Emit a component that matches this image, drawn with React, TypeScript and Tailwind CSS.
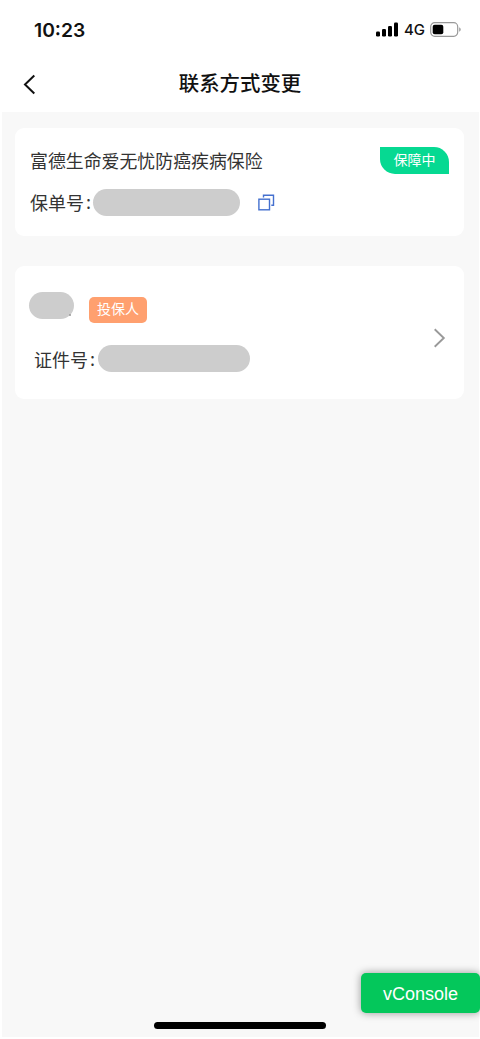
import type { ReactNode } from "react";

// Policy contact change page: status bar, nav bar, two cards and the
// vConsole debug switch that floats over the bottom corner.

function StatusBar() {
  return (
    <header className="flex h-[60px] items-center justify-between pl-[34px] pr-[18px]">
      <span className="font-['Inter','Liberation_Sans',sans-serif] text-[19.3px] font-semibold leading-6 text-[#111]">
        10:23
      </span>
      <div className="flex items-center">
        <svg className="-mt-px" width="23" height="15" viewBox="0 0 23 15" fill="#000">
          <rect x="0" y="9.5" width="4" height="5" rx="1.2" />
          <rect x="6" y="7" width="4" height="7.5" rx="1.2" />
          <rect x="12" y="4" width="4" height="10.5" rx="1.2" />
          <rect x="18" y="0.5" width="4" height="14" rx="1.2" />
        </svg>
        <span className="ml-[5px] w-[22px] font-['Inter','Liberation_Sans',sans-serif] text-[15px] font-medium leading-5 text-[#111]">
          4G
        </span>
        <svg className="-mt-px ml-1" width="32" height="15" viewBox="0 0 32 15" fill="none">
          <rect x="0.7" y="0.7" width="27" height="13.6" rx="4" stroke="#999" strokeWidth="1.2" />
          <rect x="2.7" y="2.7" width="10.6" height="9.6" rx="2" fill="#000" />
          <path d="M29.3 5.3c1.8.7 1.8 3.7 0 4.4z" fill="#888" />
        </svg>
      </div>
    </header>
  );
}

function NavBar() {
  return (
    <nav className="grid h-[52px] grid-cols-[60px_1fr_60px] items-start">
      <button aria-label="返回" className="pl-[23px] pt-[14px]">
        <svg width="14" height="21" viewBox="0 0 14 21" fill="none">
          <path d="M11.3 1.5L2 10.5l9.3 9" stroke="#111" strokeWidth="2" />
        </svg>
      </button>
      <h1 className="pt-[7px] text-center text-[20.4px] font-medium leading-[30px] text-[#111]">
        联系方式变更
      </h1>
    </nav>
  );
}

function Card({ className, children }: { className: string; children: ReactNode }) {
  return <section className={`rounded-[9px] bg-white ${className}`}>{children}</section>;
}

// Grey pill over a masked value.
function Mask({ className }: { className: string }) {
  return <span className={`block rounded-full bg-[#cdcdcd] ${className}`} />;
}

function Colon() {
  return <span className="ml-[2px] inline-block -translate-y-px">:</span>;
}

function PolicyCard() {
  return (
    <Card className="h-[108px] pl-[15px] pr-[15px] pt-[19px]">
      <div className="flex items-start justify-between">
        <h2 className="text-[17.9px] leading-[26px] text-[#333]">富德生命爱无忧防癌疾病保险</h2>
        <span className="h-[27px] w-[69px] rounded-bl-[15px] rounded-tr-[15px] bg-[#06d992] text-center text-[14px] leading-[25px] text-white">
          保障中
        </span>
      </div>
      <div className="mt-[15px] flex h-[27px] items-center">
        <span className="-mt-px w-[63px] text-[18px] leading-[26px] text-[#333]">
          保单号
          <Colon />
        </span>
        <Mask className="h-[27px] w-[147px]" />
        <button aria-label="复制" className="ml-[18px]">
          <svg width="17" height="17" viewBox="0 0 17 17" fill="none" stroke="#4470cf" strokeWidth="1.4">
            <rect x="0.9" y="5.2" width="10.6" height="10.6" />
            <path d="M5.5 3.4V1.2h10v10h-2.2" />
          </svg>
        </button>
      </div>
    </Card>
  );
}

function HolderCard() {
  return (
    <Card className="mt-[30px] flex h-[133px] items-start justify-between pl-[14px] pr-[18px] pt-[26px]">
      <div>
        <div className="flex items-start">
          <div className="relative">
            <Mask className="h-[27px] w-[45px]" />
            <span className="absolute bottom-[3px] right-[3px] size-[2px] rounded-full bg-[#999]" />
          </div>
          <span className="ml-[15px] mt-[5px] h-[26px] w-[58px] rounded-[5px] bg-[#ffa06f] text-center text-[14px] leading-[22px] text-white">
            投保人
          </span>
        </div>
        <div className="mt-[22px] flex h-[27px] items-center pl-[5px]">
          <span className="w-[64px] text-[18px] leading-[26px] text-[#333]">
            证件号
            <Colon />
          </span>
          <Mask className="h-[27px] w-[152px]" />
        </div>
      </div>
      <svg className="mt-[36px]" width="13" height="20" viewBox="0 0 13 20" fill="none">
        <path d="M1.7 1.2L10.8 10l-9.1 8.8" stroke="#999" strokeWidth="1.9" />
      </svg>
    </Card>
  );
}

export default function App() {
  return (
    <div className="relative flex h-[1039px] w-[480px] flex-col overflow-hidden bg-white font-['Noto_Sans_CJK_SC',sans-serif]">
      <StatusBar />
      <NavBar />
      <main className="mb-[2px] ml-[2px] mr-px flex-1 bg-[#f8f8f8] pl-[13px] pr-[15px] pt-4">
        <PolicyCard />
        <HolderCard />
      </main>

      <button className="absolute bottom-[26px] right-0 h-[40px] w-[119px] rounded-[5px] bg-[#04c75b] pt-px font-['Liberation_Sans',sans-serif] text-[18px] leading-[40px] text-white shadow-[0_0_9px_rgba(0,0,0,0.4)]">
        vConsole
      </button>
      <div className="absolute bottom-[10px] left-[154px] h-[7px] w-[172px] rounded-full bg-black" />
    </div>
  );
}
